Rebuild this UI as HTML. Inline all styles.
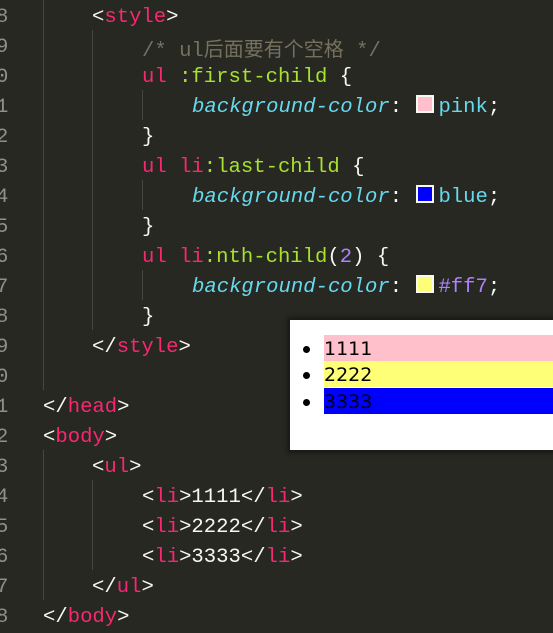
<!DOCTYPE html>
<html><head><style>
body{margin:0;width:553px;height:631px;background:#272822;position:relative;overflow:hidden;font-family:"Liberation Mono",monospace;font-size:20.6px;color:#f8f8f2}
.l{position:absolute;white-space:pre;line-height:30px;height:30px;margin-top:3px}
.n{position:absolute;left:-4px;color:#8f908a;line-height:30px;margin-top:3px}
.k{color:#f92672}.g{color:#a6e22e}.c{color:#66d9ef;font-style:italic}.p{color:#ae81ff}.m{color:#75715e}.w{color:#f8f8f2}
.sw{display:inline-block;width:14px;height:14px;border:2px solid #f8f8f2;vertical-align:-1px;margin-left:2px;margin-right:4px}
.gd{position:absolute;width:1px;background:#464741}
.box{position:absolute;left:290px;top:320px;width:263px;height:130px;background:#fff;box-shadow:0 0 4px 3px #1a1a16;font-family:"DejaVu Sans","Liberation Sans",sans-serif;font-size:19px;color:#000}
.li{position:absolute;left:34px;width:229px;height:26px;line-height:28px}
.b{position:absolute;left:-21px;top:11px;width:7px;height:7px;border-radius:50%;background:#000}
</style></head><body>
<div class="gd" style="left:43px;top:0;height:390px"></div>
<div class="gd" style="left:43px;top:450px;height:150px"></div>
<div class="gd" style="left:92px;top:30px;height:300px"></div>
<div class="gd" style="left:92px;top:480px;height:90px"></div>
<div class="gd" style="left:142px;top:90px;height:30px"></div>
<div class="gd" style="left:142px;top:180px;height:30px"></div>
<div class="gd" style="left:142px;top:270px;height:30px"></div>
<div class="n" style="top:0">8</div><div class="n" style="top:30px">9</div><div class="n" style="top:60px">0</div><div class="n" style="top:90px">1</div><div class="n" style="top:120px">2</div><div class="n" style="top:150px">3</div><div class="n" style="top:180px">4</div><div class="n" style="top:210px">5</div><div class="n" style="top:240px">6</div><div class="n" style="top:270px">7</div><div class="n" style="top:300px">8</div><div class="n" style="top:330px">9</div><div class="n" style="top:360px">0</div><div class="n" style="top:390px">1</div><div class="n" style="top:420px">2</div><div class="n" style="top:450px">3</div><div class="n" style="top:480px">4</div><div class="n" style="top:510px">5</div><div class="n" style="top:540px">6</div><div class="n" style="top:570px">7</div><div class="n" style="top:600px">8</div>
<div class="l" style="left:92px;top:0">&lt;<span class="k">style</span>&gt;</div>
<div class="l m" style="left:142px;top:30px">/* ul<span style="font-family:'Noto Sans CJK SC',sans-serif;font-size:20px">后面要有个空格</span> */</div>
<div class="l" style="left:142px;top:60px"><span class="k">ul</span> <span class="g">:first-child</span> {</div>
<div class="l" style="left:192px;top:90px"><span class="c">background-color</span>: <span class="sw" style="background:pink"></span><span class="c" style="font-style:normal">pink</span>;</div>
<div class="l" style="left:142px;top:120px">}</div>
<div class="l" style="left:142px;top:150px"><span class="k">ul li</span><span class="g">:last-child</span> {</div>
<div class="l" style="left:192px;top:180px"><span class="c">background-color</span>: <span class="sw" style="background:blue"></span><span class="c" style="font-style:normal">blue</span>;</div>
<div class="l" style="left:142px;top:210px">}</div>
<div class="l" style="left:142px;top:240px"><span class="k">ul li</span><span class="g">:nth-child</span>(<span class="p">2</span>) {</div>
<div class="l" style="left:192px;top:270px"><span class="c">background-color</span>: <span class="sw" style="background:#ff7"></span><span class="p">#ff7</span>;</div>
<div class="l" style="left:142px;top:300px">}</div>
<div class="l" style="left:92px;top:330px">&lt;/<span class="k">style</span>&gt;</div>
<div class="l" style="left:43px;top:390px">&lt;/<span class="k">head</span>&gt;</div>
<div class="l" style="left:43px;top:420px">&lt;<span class="k">body</span>&gt;</div>
<div class="l" style="left:92px;top:450px">&lt;<span class="k">ul</span>&gt;</div>
<div class="l" style="left:142px;top:480px">&lt;<span class="k">li</span>&gt;1111&lt;/<span class="k">li</span>&gt;</div>
<div class="l" style="left:142px;top:510px">&lt;<span class="k">li</span>&gt;2222&lt;/<span class="k">li</span>&gt;</div>
<div class="l" style="left:142px;top:540px">&lt;<span class="k">li</span>&gt;3333&lt;/<span class="k">li</span>&gt;</div>
<div class="l" style="left:92px;top:570px">&lt;/<span class="k">ul</span>&gt;</div>
<div class="l" style="left:43px;top:600px">&lt;/<span class="k">body</span>&gt;</div>
<div class="box">
<div class="li" style="top:15px;background:pink"><span class="b"></span>1111</div>
<div class="li" style="top:41px;background:#ff7"><span class="b"></span>2222</div>
<div class="li" style="top:68px;background:blue"><span class="b"></span>3333</div>
</div>
</body></html>
